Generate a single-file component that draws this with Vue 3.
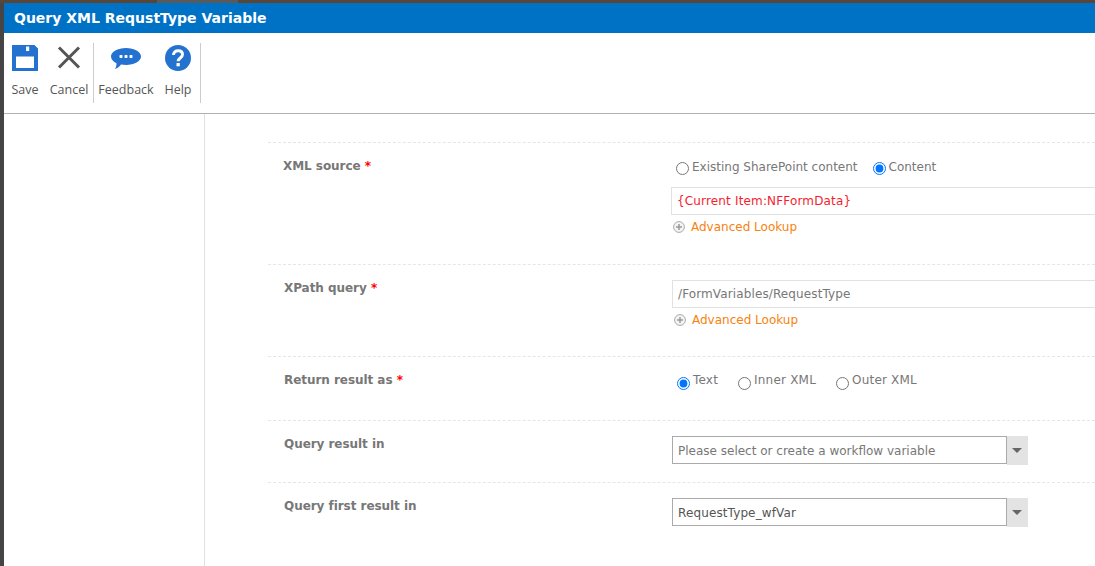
<script setup>
const tools = [
  { label: 'Save', icon: 'save' },
  { label: 'Cancel', icon: 'cancel' },
  { label: 'Feedback', icon: 'feedback' },
  { label: 'Help', icon: 'help' },
]
</script>

<template>
  <div class="frame">
    <div class="title">Query XML RequstType Variable</div>
    <div class="ribbon">
      <div v-for="t in tools" :key="t.label" class="tool" :class="t.icon">
        <svg v-if="t.icon === 'save'" width="26" height="26" viewBox="0 0 26 26">
          <path fill="#2372d0" fill-rule="evenodd" d="M0 0h22.500L26 3.500V26H0zM14 1.500v4.500h3.200V1.500zM4 11.500V23h18V11.500z" />
        </svg>
        <svg v-else-if="t.icon === 'cancel'" width="26" height="26" viewBox="0 0 26 26">
          <path stroke="#555" stroke-width="3" fill="none" d="M3 2.500l20 20M23 2.500l-20 20" />
        </svg>
        <svg v-else-if="t.icon === 'feedback'" width="30" height="26" viewBox="0 0 30 26">
          <path fill="#2372d0" d="M15 3c8.300 0 15 3.700 15 8.500S23.300 20 15 20c-1.800 0-3.500-.2-5-.5C8.500 21.500 6.500 23.300 4 24c1-1.500 1.500-3.300 1.500-5.700C2.200 16.700 0 14.300 0 11.500 0 6.700 6.700 3 15 3z" />
          <rect x="8.500" y="10" width="3" height="3" rx=".8" fill="#fff" />
          <rect x="13.500" y="10" width="3" height="3" rx=".8" fill="#fff" />
          <rect x="18.500" y="10" width="3" height="3" rx=".8" fill="#fff" />
        </svg>
        <svg v-else width="26" height="26" viewBox="0 0 26 26">
          <circle cx="13" cy="13" r="13" fill="#2372d0" />
          <path fill="none" stroke="#fff" stroke-width="3" d="M8.500 10c0-2.800 2-4.300 4.600-4.300 2.600 0 4.400 1.500 4.400 3.800 0 3.500-4.400 3.500-4.400 6.800" />
          <rect x="11.500" y="18" width="3.300" height="3.300" fill="#fff" />
        </svg>
        <span class="tool-label">{{ t.label }}</span>
      </div>
    </div>
    <div class="body">
      <aside class="side"></aside>
      <main class="form">
        <section class="row r1">
          <div class="label first">XML source <b>*</b></div>
          <div class="value">
            <div class="radios">
              <label class="radio"><input type="radio" name="src" />Existing SharePoint content</label>
              <label class="radio"><input type="radio" name="src" checked />Content</label>
            </div>
            <div class="input token">{Current Item:NFFormData}</div>
            <div class="lookup"><svg width="12" height="12" viewBox="0 0 12 12"><circle cx="6" cy="6" r="5.400" fill="#f4f4f4" stroke="#aaa" /><path d="M3 6h6M6 3v6" stroke="#999" stroke-width="1.500" /></svg>Advanced Lookup</div>
          </div>
        </section>
        <section class="row r2">
          <div class="label">XPath query <b>*</b></div>
          <div class="value">
            <div class="input plain">/FormVariables/RequestType</div>
            <div class="lookup"><svg width="12" height="12" viewBox="0 0 12 12"><circle cx="6" cy="6" r="5.400" fill="#f4f4f4" stroke="#aaa" /><path d="M3 6h6M6 3v6" stroke="#999" stroke-width="1.500" /></svg>Advanced Lookup</div>
          </div>
        </section>
        <section class="row r3">
          <div class="label">Return result as <b>*</b></div>
          <div class="value">
            <div class="radios">
              <label class="radio"><input type="radio" name="ret" checked />Text</label>
              <label class="radio"><input type="radio" name="ret" />Inner XML</label>
              <label class="radio"><input type="radio" name="ret" />Outer XML</label>
            </div>
          </div>
        </section>
        <section class="row r4">
          <div class="label">Query result in</div>
          <div class="value">
            <div class="select muted"><span>Please select or create a workflow variable</span><u></u></div>
          </div>
        </section>
        <section class="row r5">
          <div class="label">Query first result in</div>
          <div class="value">
            <div class="select"><span>RequestType_wfVar</span><u></u></div>
          </div>
        </section>
      </main>
    </div>
  </div>
</template>

<style>
html {
  background: linear-gradient(90deg, #5a4636 157px, #5a5a5a 157px 238px, #5a4636 238px) no-repeat 0 0 / 100% 3px, #454545;
}
body { margin: 0; overflow: hidden; }
</style>

<style scoped>
.frame {
  margin: 3px 0 0 4px;
  height: 563px;
  background: #fff;
  font-family: "DejaVu Sans", Verdana, sans-serif;
  font-size: 12px;
  color: #777;
  overflow: hidden;
}
.title {
  height: 30px;
  padding-left: 10px;
  background: #0072c6;
  color: #fff;
  font-weight: 700;
  font-size: 14px;
  line-height: 30px;
}
.ribbon {
  height: 81px;
  box-sizing: border-box;
  border-bottom: 1px solid #b1b1b1;
  display: flex;
  align-items: flex-start;
  padding-top: 10px;
}
.tool {
  box-sizing: border-box;
  height: 60px;
  padding-top: 2px;
  display: flex;
  flex-direction: column;
  align-items: center;
  color: #555;
  font-family: "Open Sans", sans-serif;
  font-size: 12.500px;
}
.tool svg { display: block; flex: none; }
.tool-label { margin-top: 11px; line-height: 16px; white-space: nowrap; }
.tool.save { width: 42px; }
.tool.cancel { width: 48px; padding-right: 1px; border-right: 1px solid #ccc; }
.tool.feedback { width: 64px; }
.tool.help { width: 43px; padding-right: 2px; border-right: 1px solid #ccc; }
.body { display: flex; height: 452px; }
.side { width: 200px; border-right: 1px solid #e1e1e1; flex: none; }
.form { padding: 28px 0 0 63px; flex: 1; min-width: 0; }
.row {
  display: flex;
  border-top: 1px dashed #e6e6e6;
  box-sizing: border-box;
}
.r1 { height: 122px; }
.r2 { height: 92px; }
.r3 { height: 64px; }
.r4 { height: 62px; }
.r5 { height: 70px; }
.label {
  width: 404px;
  flex: none;
  padding: 15px 0 0 16px;
  box-sizing: border-box;
  font-weight: 700;
  line-height: 16px;
  color: #777;
  letter-spacing: -0.05px;
}
.label.first { padding-left: 15px; }
.label b { color: #f00; }
.value { flex: 1; min-width: 0; }
.radios { display: flex; gap: 15px; padding: 16px 0 0 4px; line-height: 16px; }
.r3 .radios { gap: 20px; padding: 15px 0 0 5px; letter-spacing: 0.2px; }
.radio { display: flex; align-items: center; white-space: nowrap; }
.radio input {
  width: 13px;
  height: 13px;
  margin: 0 3px 0 0;
  flex: none;
  position: relative;
  top: 1px;
}
.r3 .radio input { top: 3px; }
.input {
  box-sizing: border-box;
  height: 28px;
  line-height: 26px;
  border: 1px solid #e1e1e1;
  border-right: 0;
  padding-left: 5px;
  margin-right: -20px;
}
.token { margin: 12px -20px 0 -1px; color: #f51d2e; letter-spacing: 0.16px; }
.plain { margin-top: 15px; letter-spacing: 0.12px; }
.lookup {
  display: flex;
  align-items: center;
  gap: 6px;
  color: #f7820e;
  margin-top: 4px;
  line-height: 16px;
  padding-left: 2px;
}
.r1 .lookup { padding-left: 1px; }
.select {
  display: flex;
  margin-top: 15px;
  width: 356px;
  height: 29px;
}
.select span {
  box-sizing: border-box;
  width: 335px;
  height: 28px;
  border: 1px solid #aaa;
  line-height: 28px;
  padding-left: 5px;
  white-space: nowrap;
}
.select:not(.muted) span { color: #555; letter-spacing: 0.12px; }
.select u {
  width: 21px;
  background: #e3e3e3;
  position: relative;
}
.select u::after {
  content: "";
  position: absolute;
  left: 5px;
  top: 12px;
  border: 5px solid transparent;
  border-top: 5px solid #666;
  border-bottom: 0;
}
</style>
